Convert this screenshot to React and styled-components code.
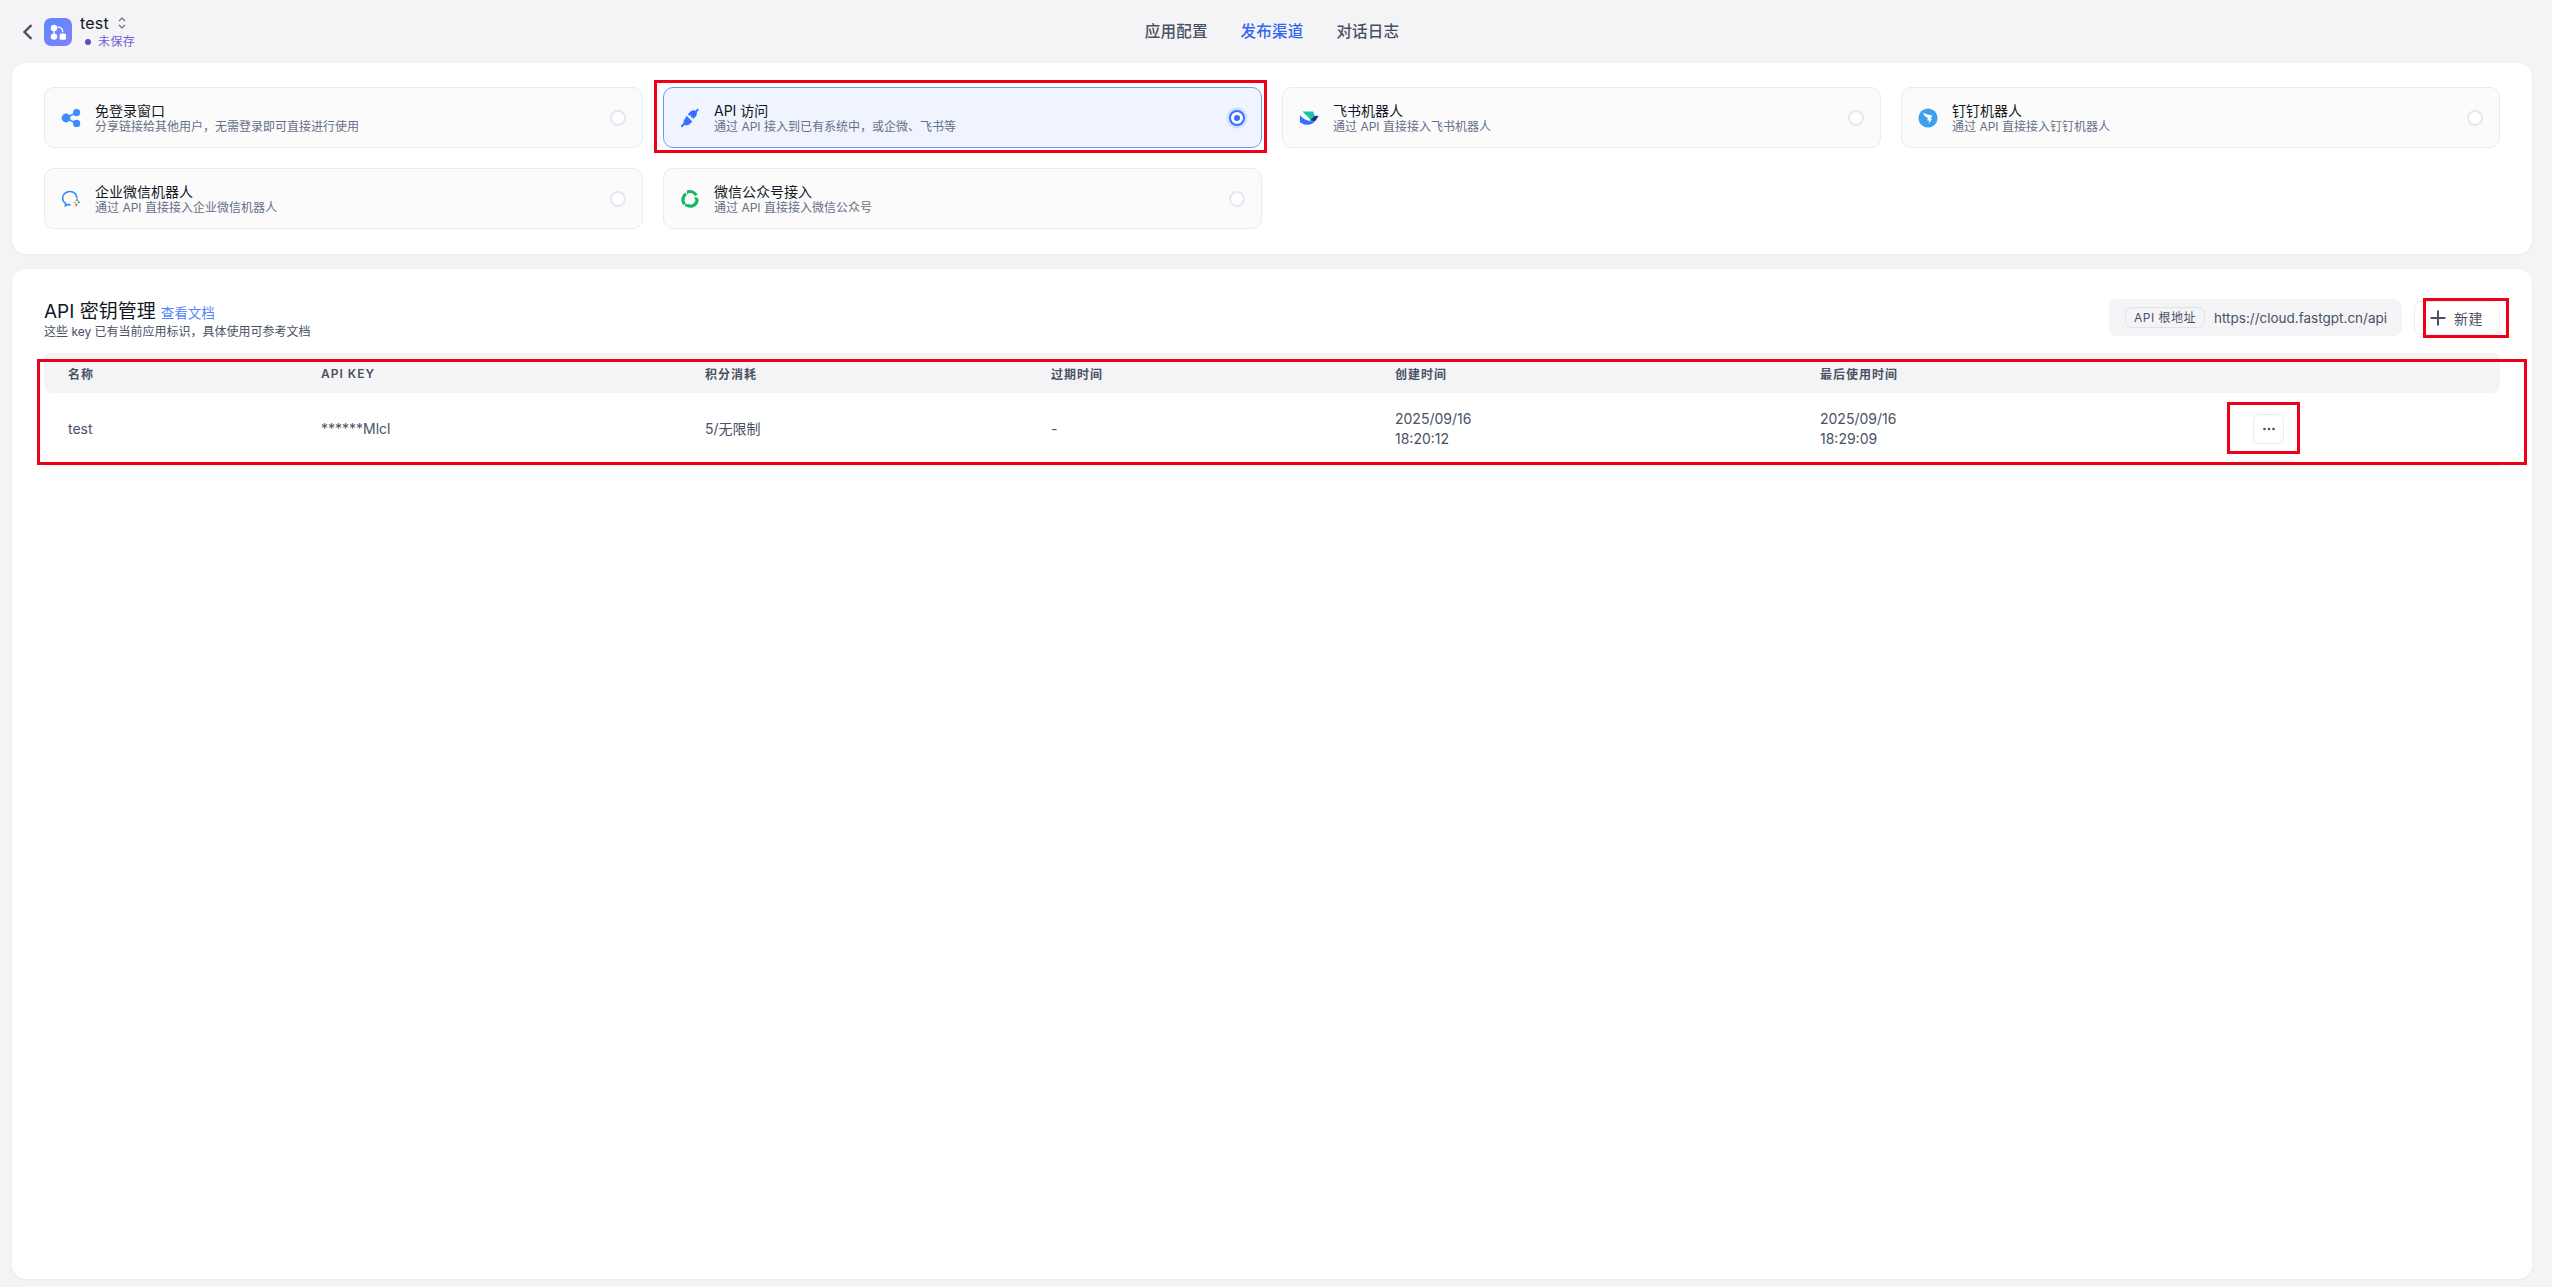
import React from 'react';
import styled, { createGlobalStyle } from 'styled-components';

const GlobalStyle = createGlobalStyle`
  html, body {
    margin: 0;
    padding: 0;
    background: #f4f4f7;
    font-family: Inter, "Noto Sans CJK SC", "Noto Sans", sans-serif;
    color: #111824;
  }
  * { box-sizing: border-box; }
`;

const Page = styled.div`
  height: 1287px;
  padding: 0 20px 8px 12px;
  display: flex;
  flex-direction: column;
  overflow: hidden;
`;

const Header = styled.header`
  height: 63px;
  flex: none;
  display: grid;
  grid-template-columns: 1fr auto 1fr;
  align-items: center;
`;

const AppInfo = styled.div`
  display: flex;
  align-items: center;
  padding-left: 9px;
`;

const Back = styled.span`
  display: flex;
  width: 23px;
  color: #485264;
`;

const AppLogo = styled.span`
  display: flex;
  width: 28px;
  height: 28px;
  margin-right: 8px;
`;

const AppText = styled.div`
  display: flex;
  flex-direction: column;
`;

const AppName = styled.div`
  display: flex;
  align-items: center;
  gap: 9px;
  font-size: 16px;
  line-height: 20px;
  color: #111824;
  letter-spacing: 0.2px;
`;

const Unsaved = styled.div`
  display: flex;
  align-items: center;
  gap: 7px;
  padding-left: 5px;
  font-size: 12px;
  line-height: 18px;
  color: #6f5dd7;
  letter-spacing: 0.4px;
  &::before {
    content: '';
    width: 6px;
    height: 6px;
    border-radius: 50%;
    background: #5e4fc4;
  }
`;

const Tabs = styled.nav`
  display: flex;
  gap: 33px;
`;

const Tab = styled.span`
  font-size: 15.5px;
  line-height: 22px;
  font-weight: 500;
  letter-spacing: 0.2px;
  color: ${({ $active }) => ($active ? '#2f66ee' : '#485264')};
`;

const Panel = styled.section`
  background: #fff;
  border-radius: 14px;
  box-shadow: 0 1px 3px rgba(19, 51, 107, 0.06);
`;

const ChannelPanel = styled(Panel)`
  flex: none;
  height: 191px;
  padding: 24px 32px;
  display: grid;
  grid-template-columns: repeat(4, 1fr);
  grid-auto-rows: 61px;
  gap: 20px;
`;

const Card = styled.div`
  position: relative;
  display: flex;
  align-items: center;
  padding: 0 16px;
  border-radius: 10px;
  border: 1px solid ${({ $active }) => ($active ? '#6f9bf5' : '#e8ebf0')};
  background: ${({ $active }) => ($active ? '#f0f4ff' : '#fbfbfc')};
`;

const CardIcon = styled.span`
  display: flex;
  flex: none;
  width: 20px;
  height: 20px;
  margin-right: 14px;
`;

const CardBody = styled.div`
  flex: 1;
  min-width: 0;
  padding-top: 2px;
`;

const CardTitle = styled.div`
  font-size: 14px;
  line-height: 17px;
  letter-spacing: 0;
  color: #111824;
`;

const CardDesc = styled.div`
  font-size: 12px;
  line-height: 16px;
  letter-spacing: 0;
  color: #667085;
`;

const Radio = styled.span`
  flex: none;
  width: 16px;
  height: 16px;
  border-radius: 50%;
  background: #fff;
  border: 2px solid ${({ $active }) => ($active ? '#3370ff' : '#e4e8f1')};
  box-shadow: ${({ $active }) => ($active ? '0 0 0 2.4px rgba(51, 112, 255, 0.16)' : 'none')};
  display: flex;
  align-items: center;
  justify-content: center;
  &::after {
    content: '';
    display: ${({ $active }) => ($active ? 'block' : 'none')};
    width: 6px;
    height: 6px;
    border-radius: 50%;
    background: #3370ff;
  }
`;

const KeysPanel = styled(Panel)`
  flex: 1;
  margin-top: 15px;
  padding: 20px 32px 0;
`;

const KeysHeader = styled.div`
  display: flex;
  align-items: center;
  justify-content: space-between;
  height: 57px;
`;

const KeysHeading = styled.div`
  padding-top: 6px;
`;

const TitleRow = styled.div`
  display: flex;
  align-items: flex-end;
  gap: 5px;
`;

const KeysTitle = styled.h2`
  margin: 0;
  font-size: 19px;
  line-height: 22px;
  font-weight: 400;
  color: #111824;
`;

const DocsLink = styled.a`
  font-size: 13.5px;
  line-height: 20px;
  color: #5585f5;
`;

const KeysDesc = styled.div`
  font-size: 12px;
  line-height: 18px;
  letter-spacing: 0;
  color: #485264;
`;

const HeaderActions = styled.div`
  display: flex;
  align-items: center;
  gap: 12px;
`;

const BaseUrl = styled.div`
  display: flex;
  align-items: center;
  gap: 9px;
  width: 293px;
  height: 37px;
  padding-left: 16px;
  border-radius: 8px;
  background: #f4f4f7;
  font-size: 13.5px;
  letter-spacing: 0;
  color: #485264;
`;

const BaseUrlTag = styled.span`
  padding: 0 8px;
  height: 21px;
  line-height: 19px;
  border-radius: 7px;
  border: 1px solid #dfe2ea;
  font-size: 12px;
  letter-spacing: 0.5px;
`;

const Button = styled.button`
  position: relative;
  display: flex;
  align-items: center;
  gap: 8px;
  width: 86px;
  height: 34px;
  padding: 0 0 0 15px;
  border-radius: 7px;
  border: 1px solid #e8ebf0;
  background: #fff;
  font: inherit;
  font-size: 14px;
  color: #485264;
  letter-spacing: 0.4px;
`;

const Table = styled.div`
  position: relative;
  margin-top: 7px;
`;

const Row = styled.div`
  display: grid;
  grid-template-columns: 253px 384px 346px 344px 425px 433px 1fr;
  align-items: center;
`;

const HeadRow = styled(Row)`
  height: 40px;
  border-radius: 8px;
  background: #f4f4f7;
  font-size: 12px;
  font-weight: 600;
  letter-spacing: 1px;
  color: #485264;
`;

const BodyRow = styled(Row)`
  height: 73px;
  border-bottom: 1px solid #f0f1f6;
  font-size: 14px;
  line-height: 20px;
  color: #485264;
`;

const Cell = styled.div`
  padding-left: 24px;
`;

const MoreButton = styled.div`
  position: relative;
  display: flex;
  align-items: center;
  justify-content: center;
  width: 31px;
  height: 30px;
  border-radius: 6px;
  border: 1px solid #e8ebf0;
  color: #485264;
`;

const Highlight = styled.span`
  position: absolute;
  inset: ${({ $inset }) => $inset};
  border: 3px solid #ee0019;
  pointer-events: none;
  z-index: 2;
`;

const LogoIcon = () => (
  <svg viewBox="0 0 28 28" width="28" height="28">
    <defs>
      <linearGradient id="logo" x1="0" y1="0" x2="1" y2="1">
        <stop offset="0" stopColor="#5d88ff" />
        <stop offset="1" stopColor="#7f80fa" />
      </linearGradient>
    </defs>
    <rect width="28" height="28" rx="7" fill="url(#logo)" />
    <circle cx="10" cy="10" r="3.2" fill="#fff" />
    <circle cx="10" cy="18.6" r="3.2" fill="#fff" />
    <rect x="15.6" y="15.4" width="6.4" height="6.4" rx="1.6" fill="#fff" />
    <path d="M10 12v4M13.5 9.2c3.4 0 5.3 1.8 5.3 5" fill="none" stroke="#fff" strokeWidth="1.3" />
  </svg>
);

const ShareIcon = () => (
  <svg viewBox="0 0 20 20" width="20" height="20">
    <path d="M5 10 15.5 4.5M5 10l10.5 5.5" stroke="#3a8dfb" strokeWidth="1.6" fill="none" />
    <circle cx="5" cy="10" r="4.4" fill="#3a8dfb" />
    <circle cx="15.6" cy="4.6" r="3.6" fill="#3a8dfb" />
    <circle cx="15.6" cy="15.4" r="3.6" fill="#3a8dfb" />
  </svg>
);

const PlugIcon = () => (
  <svg viewBox="0 0 20 20" width="20" height="20" fill="#3370ff">
    <path d="M10.4 3.6c1.9-1.7 4.4-1.9 5.7-.6 1.3 1.3 1.1 3.8-.6 5.7l-2.6 2.5-5-5z" />
    <path d="M6.6 7.7 12.3 13.4 10 15.7c-1.9 1.8-4.4 2-5.7.7-1.3-1.3-1.1-3.8.7-5.7z" />
    <path d="M15.6 4.2 18.2 1.2M4.4 15.6 1.4 18.8" stroke="#3370ff" strokeWidth="2" />
    <path d="M11 7.6 9.4 9.3M13 9.6 11.4 11.3" stroke="#f0f4ff" strokeWidth="1.2" />
  </svg>
);

const FeishuIcon = () => (
  <svg viewBox="0 0 20 20" width="20" height="20">
    <path d="M3.5 3.5h10.4l2.3 5.1-4.7 3.2z" fill="#17c4a6" />
    <path d="M10.6 12.6 14 9.4c1.3-1.2 3-1.7 5.6-1.5-1.2 1.7-2.2 3.8-3.6 5.3z" fill="#15327f" />
    <path d="M.9 7.2c3 3.4 6.6 5.2 9.6 5.8 2.1.4 4.1.2 5.5 .1-1.6 2.5-4.2 3.7-7.1 3.7-2.9 0-5.8-1-8-2.6z" fill="#3370ff" />
  </svg>
);

const DingIcon = () => (
  <svg viewBox="0 0 20 20" width="20" height="20">
    <circle cx="10" cy="10" r="9.6" fill="#3c9ff0" />
    <path d="M5.2 4.8c2.8 1.3 6 2.3 9 2.8-.3 1.2-.9 2.4-1.6 3.3l1.5.2-3.5 5 .7-3.4-2.3-.5 1-2C7.8 9.4 5.8 7.6 5.2 4.8z" fill="#fff" />
  </svg>
);

const WecomIcon = () => (
  <svg viewBox="0 0 20 20" width="20" height="20" fill="none">
    <path d="M16 9.4C15.8 5.4 12.8 2.4 9 2.4 5 2.4 1.6 5.3 1.6 9c0 2.4 1.2 4.4 3.2 5.6l-.5 2.2 2.8-1.3c.8.2 1.7.3 2.6.3" stroke="#2f8cf2" strokeWidth="1.5" />
    <path d="M14.2 11.2 16.6 9.4l.6 2.8z" fill="#2cb34a" />
    <path d="M17 11.8 19.6 13.6l-2.8 1z" fill="#2f8cf2" />
    <path d="M11.8 13.4 14.4 12l.5 2.6z" fill="#f6b400" />
    <path d="M14.2 14.8 16.6 14.8l-1.6 3.2z" fill="#e8502f" />
  </svg>
);

const WechatIcon = () => (
  <svg viewBox="0 0 20 20" width="20" height="20" fill="none" stroke="#12b85c" strokeWidth="3.2">
    <path d="M4.6 15.2A7 7 0 0 1 3.4 8.2 7 7 0 0 1 6 4.7" />
    <path d="M8 2.8A7 7 0 0 1 16.2 6.4" />
    <path d="M17 9.6a7 7 0 0 1-4.2 7.1 7 7 0 0 1-5.4-.3" />
    <path d="M9.6 2.4 6.8 1.2l.2 4.4z" fill="#12b85c" stroke="none" />
    <path d="M17.8 8.6l-3.8-.4 2.2 3.8z" fill="#12b85c" stroke="none" />
    <path d="M5.8 18.2 9 15.6l-4.2-.9z" fill="#12b85c" stroke="none" />
  </svg>
);

const channels = [
  { title: '免登录窗口', desc: '分享链接给其他用户，无需登录即可直接进行使用', icon: <ShareIcon /> },
  { title: 'API 访问', desc: '通过 API 接入到已有系统中，或企微、飞书等', icon: <PlugIcon />, active: true },
  { title: '飞书机器人', desc: '通过 API 直接接入飞书机器人', icon: <FeishuIcon /> },
  { title: '钉钉机器人', desc: '通过 API 直接接入钉钉机器人', icon: <DingIcon /> },
  { title: '企业微信机器人', desc: '通过 API 直接接入企业微信机器人', icon: <WecomIcon /> },
  { title: '微信公众号接入', desc: '通过 API 直接接入微信公众号', icon: <WechatIcon /> },
];

const App = () => {
  return (
    <>
      <GlobalStyle />
      <Page>
        <Header>
          <AppInfo>
            <Back>
              <svg width="14" height="20" viewBox="0 0 14 20" fill="none" stroke="currentColor" strokeWidth="2.4">
                <path d="M10.5 3 3.5 10l7 7" />
              </svg>
            </Back>
            <AppLogo>
              <LogoIcon />
            </AppLogo>
            <AppText>
              <AppName>
                test
                <svg width="8" height="14" viewBox="0 0 8 14" fill="none" stroke="#667085" strokeWidth="1.2">
                  <path d="M1 5 4 2l3 3M1 9l3 3 3-3" />
                </svg>
              </AppName>
              <Unsaved>未保存</Unsaved>
            </AppText>
          </AppInfo>
          <Tabs>
            <Tab>应用配置</Tab>
            <Tab $active>发布渠道</Tab>
            <Tab>对话日志</Tab>
          </Tabs>
        </Header>

        <ChannelPanel>
          {channels.map((channel) => (
            <Card key={channel.title} $active={channel.active}>
              <CardIcon>{channel.icon}</CardIcon>
              <CardBody>
                <CardTitle>{channel.title}</CardTitle>
                <CardDesc>{channel.desc}</CardDesc>
              </CardBody>
              <Radio $active={channel.active} />
              {channel.active && <Highlight $inset="-8px -6px -6px -10px" />}
            </Card>
          ))}
        </ChannelPanel>

        <KeysPanel>
          <KeysHeader>
            <KeysHeading>
              <TitleRow>
                <KeysTitle>API 密钥管理</KeysTitle>
                <DocsLink>查看文档</DocsLink>
              </TitleRow>
              <KeysDesc>这些 key 已有当前应用标识，具体使用可参考文档</KeysDesc>
            </KeysHeading>
            <HeaderActions>
              <BaseUrl>
                <BaseUrlTag>API 根地址</BaseUrlTag>
                https://cloud.fastgpt.cn/api
              </BaseUrl>
              <Button>
                <svg width="16" height="16" viewBox="0 0 16 16" stroke="currentColor" strokeWidth="2">
                  <path d="M8 0.5v15M0.5 8h15" />
                </svg>
                新建
                <Highlight $inset="-4px -10px -4px 8px" />
              </Button>
            </HeaderActions>
          </KeysHeader>

          <Table>
            <HeadRow>
              <Cell>名称</Cell>
              <Cell>API KEY</Cell>
              <Cell>积分消耗</Cell>
              <Cell>过期时间</Cell>
              <Cell>创建时间</Cell>
              <Cell>最后使用时间</Cell>
              <Cell />
            </HeadRow>
            <BodyRow>
              <Cell>test</Cell>
              <Cell>******Mlcl</Cell>
              <Cell>5/无限制</Cell>
              <Cell>-</Cell>
              <Cell>
                2025/09/16
                <br />
                18:20:12
              </Cell>
              <Cell>
                2025/09/16
                <br />
                18:29:09
              </Cell>
              <Cell>
                <MoreButton>
                  <svg width="14" height="4" viewBox="0 0 14 4" fill="currentColor">
                    <circle cx="2.5" cy="2" r="1.3" />
                    <circle cx="7" cy="2" r="1.3" />
                    <circle cx="11.5" cy="2" r="1.3" />
                  </svg>
                  <Highlight $inset="-13px -17px -11px -27px" />
                </MoreButton>
              </Cell>
            </BodyRow>
            <Highlight $inset="6px -27px 1px -7px" />
          </Table>
        </KeysPanel>
      </Page>
    </>
  );
};

export default App;
